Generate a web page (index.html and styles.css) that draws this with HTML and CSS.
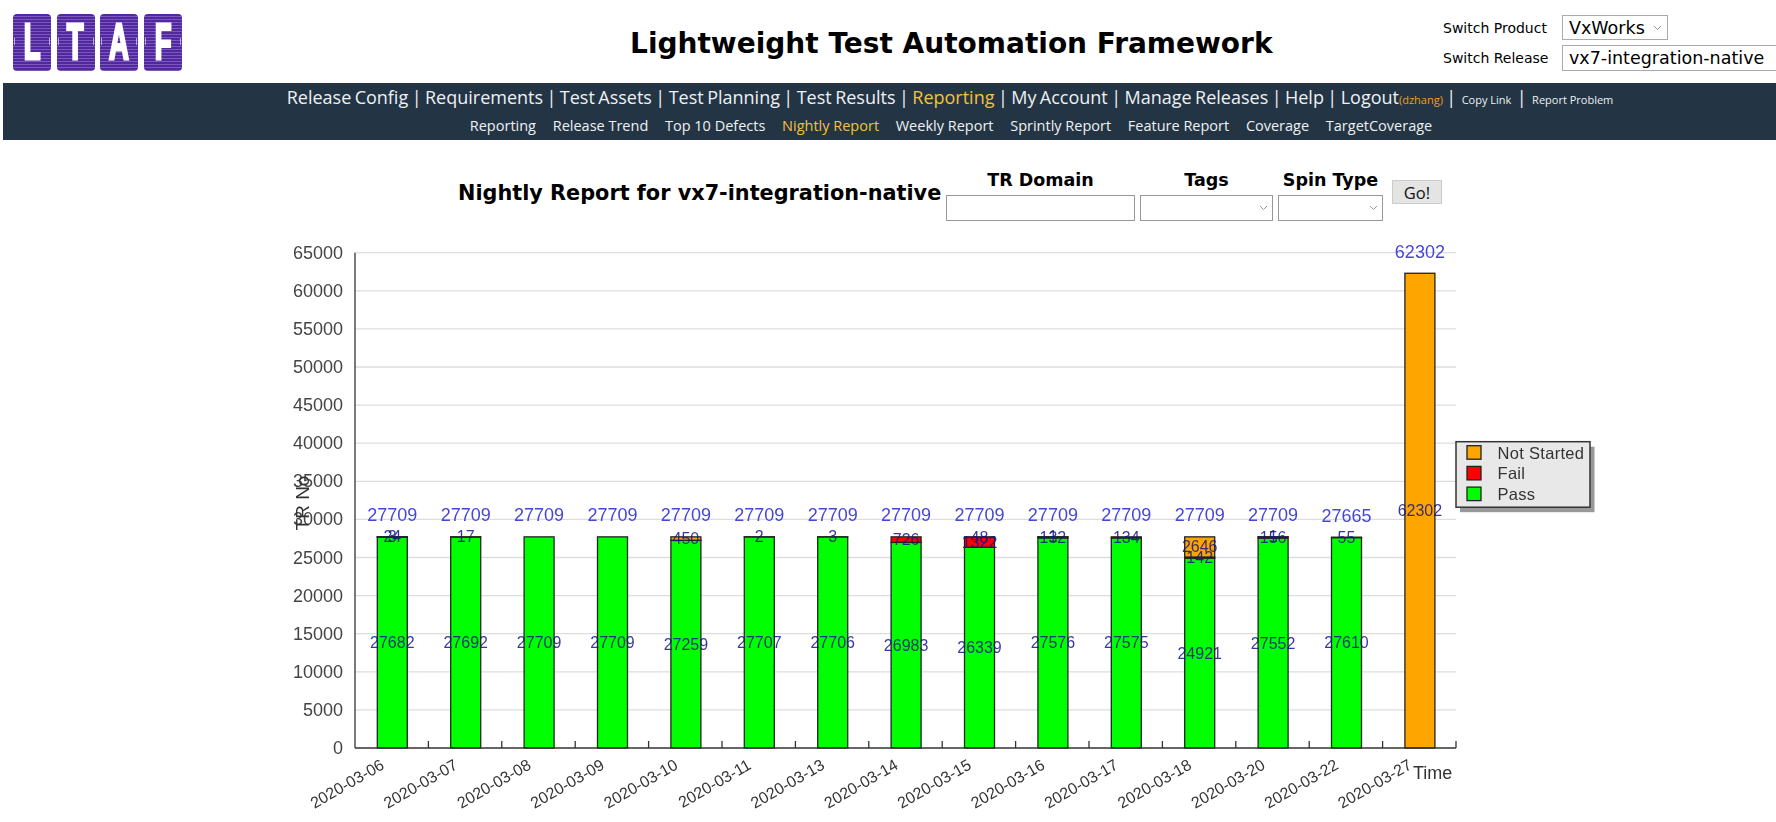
FILE: index.html
```html
<!DOCTYPE html>
<html lang="en">
<head>
  <meta charset="UTF-8">
  <title>Lightweight Test Automation Framework</title>
  <link rel="stylesheet" href="styles.css">
</head>
<body>

  <header class="top">
    <div class="logo">
      <span class="tile"><b>L</b></span>
      <span class="tile"><b>T</b></span>
      <span class="tile"><b>A</b></span>
      <span class="tile"><b>F</b></span>
    </div>
    <h1>Lightweight Test Automation Framework</h1>
    <div class="switcher">
      <label>Switch Product</label>
      <select class="product"><option>VxWorks</option></select>
      <label>Switch Release</label>
      <select class="release"><option>vx7-integration-native</option></select>
    </div>
  </header>

  <nav class="menu">
    <div class="main-links">
      <a>Release Config</a> | <a>Requirements</a> | <a>Test Assets</a> | <a>Test Planning</a> | <a>Test Results</a> | <a class="active">Reporting</a> | <a>My Account</a> | <a>Manage Releases</a> | <a>Help</a> | <a>Logout</a><span class="user">(dzhang)</span> | <a class="small">Copy Link</a> | <a class="small">Report Problem</a>
    </div>
    <div class="sub-links">
      <a>Reporting</a>
      <a>Release Trend</a>
      <a>Top 10 Defects</a>
      <a class="active">Nightly Report</a>
      <a>Weekly Report</a>
      <a>Sprintly Report</a>
      <a>Feature Report</a>
      <a>Coverage</a>
      <a>TargetCoverage</a>
    </div>
  </nav>

  <section class="report-head">
    <h2>Nightly Report for vx7-integration-native</h2>
    <div class="field domain">
      <span>TR Domain</span>
      <input type="text">
    </div>
    <div class="field tags">
      <span>Tags</span>
      <select></select>
    </div>
    <div class="field spin">
      <span>Spin Type</span>
      <select></select>
    </div>
    <button class="go">Go!</button>
  </section>

  <svg id="chart" class="chart" viewBox="0 0 1776 582" width="1776" height="582"></svg>

  <script>
    // the chart's top edge sits at y=240 on the page
    const TOP = 240;
    const X0 = 355, X1 = 1456, Y0 = 748 - TOP, STEP = 73.4, BAR = 30;
    const SCALE = 495.3 / 65000;

    const nightly = [
      { date: "2020-03-06", total: 27709, pass: 27682, fail: 24, ns: 3 },
      { date: "2020-03-07", total: 27709, pass: 27692, fail: 17, ns: 0 },
      { date: "2020-03-08", total: 27709, pass: 27709, fail: 0, ns: 0 },
      { date: "2020-03-09", total: 27709, pass: 27709, fail: 0, ns: 0 },
      { date: "2020-03-10", total: 27709, pass: 27259, fail: 0, ns: 450 },
      { date: "2020-03-11", total: 27709, pass: 27707, fail: 2, ns: 0 },
      { date: "2020-03-13", total: 27709, pass: 27706, fail: 3, ns: 0 },
      { date: "2020-03-14", total: 27709, pass: 26983, fail: 726, ns: 0 },
      { date: "2020-03-15", total: 27709, pass: 26339, fail: 1322, ns: 48 },
      { date: "2020-03-16", total: 27709, pass: 27576, fail: 132, ns: 1 },
      { date: "2020-03-17", total: 27709, pass: 27575, fail: 134, ns: 0 },
      { date: "2020-03-18", total: 27709, pass: 24921, fail: 142, ns: 2646 },
      { date: "2020-03-20", total: 27709, pass: 27552, fail: 156, ns: 1 },
      { date: "2020-03-22", total: 27665, pass: 27610, fail: 55, ns: 0 },
      { date: "2020-03-27", total: 62302, pass: 0, fail: 0, ns: 62302 }
    ];

    let out = "";

    function line(x1, y1, x2, y2, cls) {
      out += `<line x1="${x1}" y1="${y1}" x2="${x2}" y2="${y2}" class="${cls}"/>`;
    }

    function text(x, y, value, cls, extra) {
      out += `<text x="${x}" y="${y}" class="${cls}" ${extra || ""}>${value}</text>`;
    }

    // grid and y axis labels
    for (let v = 0; v <= 65000; v += 5000) {
      const y = Y0 - v * SCALE;
      if (v > 0) line(X0, y, X1, y, "grid");
      text(343, y, v, "y-label");
    }

    // segments, bottom to top
    nightly.forEach((day, i) => {
      const left = X0 + 22.3 + i * STEP;
      const mid = left + BAR / 2;
      let base = Y0;
      const labels = [];

      [["pass", day.pass], ["fail", day.fail], ["ns", day.ns]].forEach(([cls, value]) => {
        if (!value) return;
        const h = value * SCALE;
        out += `<rect x="${left}" y="${base - h}" width="${BAR}" height="${h}" class="bar ${cls}"/>`;
        labels.push([mid, base - h / 2, value]);
        base -= h;
      });

      labels.forEach(l => text(l[0], l[1], l[2], "seg-label"));
      text(mid, base - 21.5, day.total, "total-label");

      const tx = mid - 7, ty = Y0 + 20;
      text(tx, ty, day.date, "x-label", `transform="rotate(-30 ${tx} ${ty})"`);
    });

    // axes go over the bars
    line(X0, Y0 - 495.3, X0, Y0, "axis");
    line(X0, Y0, X1, Y0, "axis");
    for (let i = 1; i <= 15; i++) {
      line(X0 + i * STEP, Y0 - 7, X0 + i * STEP, Y0, "axis");
    }

    text(0, 0, "TR No", "y-title", `transform="translate(309 ${503 - TOP}) rotate(-90)"`);
    text(1413, 773 - TOP, "Time", "x-title");

    // legend
    const LEG = 441.7 - TOP;
    out += `<rect x="1460" y="${LEG + 5}" width="134.5" height="65.5" class="legend-shadow"/>`;
    out += `<rect x="1456" y="${LEG}" width="134" height="65.5" class="legend-box"/>`;
    [["Not Started", "ns"], ["Fail", "fail"], ["Pass", "pass"]].forEach(([name, cls], i) => {
      const y = LEG + 4 + i * 20.7;
      out += `<rect x="1467" y="${y}" width="14" height="13.5" class="swatch ${cls}"/>`;
      text(1497.5, y + 7, name, "legend-label");
    });

    document.getElementById("chart").innerHTML = out;
  </script>

</body>
</html>
```

FILE: styles.css
```css
:root {
  --bar-bg: #233444;
  --active: #f5c13d;
  --chevron: url("data:image/svg+xml,%3Csvg xmlns='http://www.w3.org/2000/svg' width='9' height='6'%3E%3Cpath d='M1 1l3.5 3.5L8 1' fill='none' stroke='%23999' stroke-width='1'/%3E%3C/svg%3E");
}

body {
  margin: 0;
  background: #fff;
  color: #000;
  font-family: "Open Sans", sans-serif;
}

/* header */

.top {
  height: 83px;
  position: relative;
  display: flex;
  align-items: flex-start;
}

.logo {
  display: flex;
  gap: 5.7px;
  margin: 14px 0 0 13px;
}

.tile {
  position: relative;
  width: 38px;
  height: 57px;
  border-radius: 4px;
  background: repeating-linear-gradient(to bottom, #52289f 0, #52289f 2px, #7a58bd 2px, #7a58bd 3px);
  display: flex;
  justify-content: center;
  align-items: center;
}

.tile::before,
.tile::after {
  content: "";
  position: absolute;
  top: 24px;
  width: 1px;
  height: 7px;
  background: #b9a6de;
}

.tile::before { left: 1px; }
.tile::after { right: 1px; }

.tile b {
  color: #fff;
  font-family: "Liberation Sans", sans-serif;
  font-size: 50px;
  line-height: 57px;
  -webkit-text-stroke: 3px #fff;
  transform: scaleX(0.55);
}

h1 {
  margin: 25px 0 0 448px;
  font-family: "DejaVu Sans", sans-serif;
  font-size: 28px;
  line-height: 38px;
  white-space: nowrap;
}

.switcher {
  position: absolute;
  top: 15px;
  left: 1443px;
  right: 0;
  display: grid;
  grid-template-columns: 104px 1fr;
  column-gap: 15px;
  row-gap: 5px;
  justify-items: start;
  align-items: center;
}

.switcher label {
  font-family: "DejaVu Sans", sans-serif;
  font-size: 14px;
  white-space: nowrap;
}

.switcher select {
  font-family: "DejaVu Sans", sans-serif;
  font-size: 17.5px;
  height: 25px;
  padding: 0 0 0 6px;
  background: #fff;
  color: #000;
  border: 1px solid #aaa;
  border-radius: 0;
  appearance: none;
}

.switcher .product {
  width: 106px;
  background: #fff var(--chevron) no-repeat right 5px center;
}

/* cut off by the window in the original, so no right border */
.switcher .release {
  width: 100%;
  height: 26px;
  border-right: none;
}

/* nav: the links are centred on a page wider than the window */

.menu {
  box-sizing: border-box;
  margin-left: 3px;
  height: 57px;
  padding-left: 123px;
  background: var(--bar-bg);
  color: #eef1f3;
  text-align: center;
  font-family: "Open Sans", sans-serif;
}

.main-links {
  font-size: 18px;
  line-height: 28px;
  word-spacing: -1.25px;
  white-space: nowrap;
}

.main-links .user {
  color: #f39c1f;
  font-size: 11px;
  word-spacing: 0;
}

.main-links .small {
  font-size: 11px;
  margin: 0 2px;
  word-spacing: 0;
}

.active {
  color: var(--active);
}

.sub-links {
  display: flex;
  justify-content: center;
  gap: 16.7px;
  font-size: 14.5px;
  line-height: 24px;
}

/* report title row */

.report-head {
  height: 100px;
  position: relative;
  display: flex;
  align-items: flex-start;
  padding-left: 458px;
}

.report-head h2 {
  margin: 39px 0 0;
  width: 488px;
  font-family: "DejaVu Sans", sans-serif;
  font-size: 20.8px;
  line-height: 28px;
  white-space: nowrap;
}

.field {
  display: flex;
  flex-direction: column;
  align-items: stretch;
  margin-top: 31px;
  text-align: center;
  font-family: "DejaVu Sans", sans-serif;
  font-weight: bold;
  font-size: 17.5px;
  line-height: 19px;
}

.field input,
.field select {
  box-sizing: border-box;
  height: 26px;
  margin-top: 5px;
  background: #fff;
  border: 1px solid #999;
  border-radius: 0;
}

.field select {
  appearance: none;
  background: #fff var(--chevron) no-repeat right 4px center;
}

.domain { width: 189px; }
.tags { width: 133px; margin-left: 5px; }
.spin { width: 105px; margin-left: 5px; }

.go {
  box-sizing: border-box;
  width: 50px;
  height: 24px;
  margin: 40px 0 0 9px;
  padding: 0;
  background: #e4e4e4;
  border: 1px solid #ccc;
  font-family: "Open Sans", sans-serif;
  font-size: 16.5px;
  color: #111;
}

/* chart */

.chart {
  display: block;
  filter: blur(0.45px);
  font-family: "Liberation Sans", sans-serif;
}

.grid {
  stroke: #ddd;
  stroke-width: 1.3;
}

.axis {
  stroke: #333;
  stroke-width: 1.3;
}

.bar,
.swatch {
  stroke: #222;
  stroke-width: 1.3;
}

.pass { fill: #00ff00; }
.fail { fill: #ff0000; }
.ns { fill: #ffa500; }

.y-label {
  font-size: 18px;
  fill: #444;
  text-anchor: end;
  dominant-baseline: central;
}

.total-label {
  font-size: 18px;
  fill: #4646d8;
  text-anchor: middle;
  dominant-baseline: central;
}

.seg-label {
  font-size: 16px;
  fill: rgba(20, 20, 140, 0.85);
  text-anchor: middle;
  dominant-baseline: central;
}

.x-label {
  font-size: 16px;
  fill: #333;
  text-anchor: end;
}

.y-title,
.x-title {
  font-size: 18px;
  fill: #333;
}

.y-title {
  font-size: 19px;
  text-anchor: middle;
}

.x-title {
  dominant-baseline: central;
}

.legend-box {
  fill: #e8e8e8;
  stroke: #333;
  stroke-width: 1.5;
}

.legend-shadow {
  fill: #999;
}

.legend-label {
  font-size: 16.5px;
  letter-spacing: 0.3px;
  fill: #333;
  dominant-baseline: central;
}
```
